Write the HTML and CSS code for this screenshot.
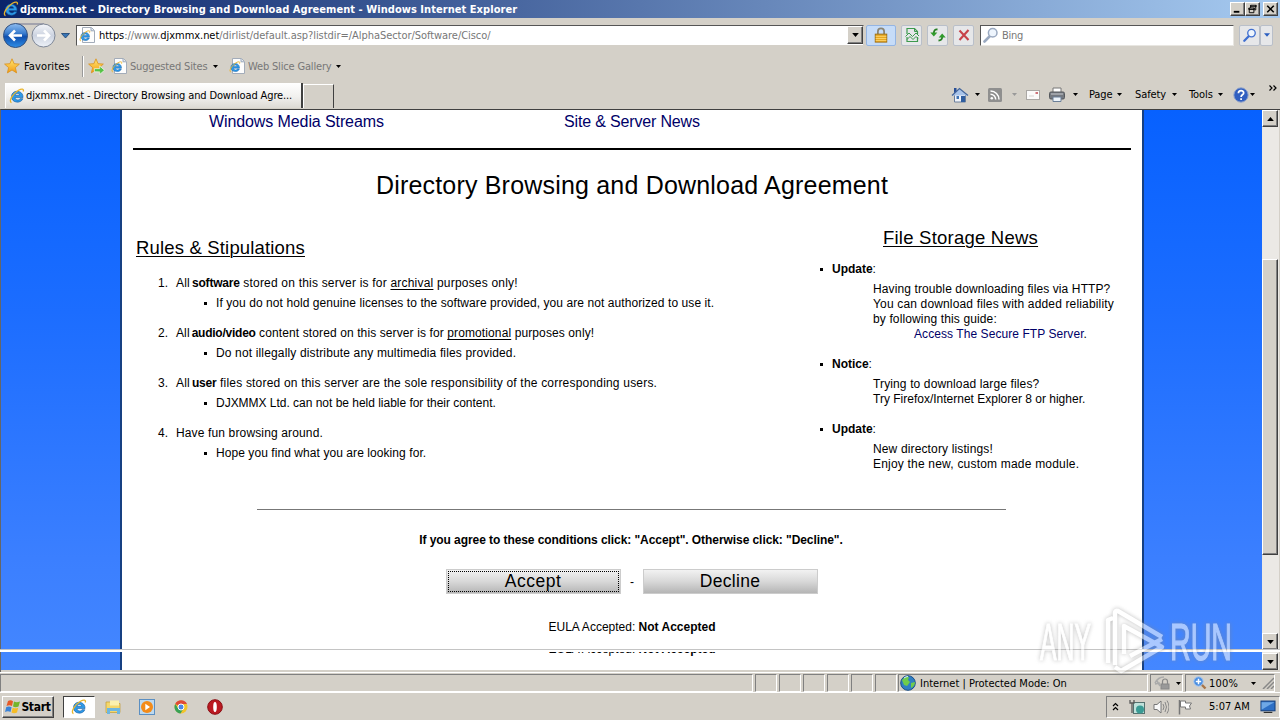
FILE: index.html
```html
<!DOCTYPE html>
<html lang="en"><head><meta charset="utf-8"><title>djxmmx.net</title><link rel="stylesheet" href="styles.css"></head>
<body>
<svg width="0" height="0" class="defs">
<defs>
<linearGradient id="gBlue" x1="0" y1="0" x2="0" y2="1"><stop offset="0" stop-color="#8fbdf0"/><stop offset=".4" stop-color="#3c7fd0"/><stop offset=".55" stop-color="#0f4fae"/><stop offset="1" stop-color="#2f8fe8"/></linearGradient>
<linearGradient id="gPale" x1="0" y1="0" x2="0" y2="1"><stop offset="0" stop-color="#f4f6fa"/><stop offset=".5" stop-color="#ccd3e0"/><stop offset="1" stop-color="#eef2f8"/></linearGradient>
<linearGradient id="gStar" x1="0" y1="0" x2="0" y2="1"><stop offset="0" stop-color="#ffe873"/><stop offset="1" stop-color="#f39a12"/></linearGradient>
</defs>
<symbol id="ie" viewBox="0 0 16 16"><path d="M14 9.600H6c.2 2.800 4.200 3 5 1.100h2.800C12.300 15.800 2.500 15.300 2.500 8.700 2.500 1.200 14.500 1.400 14 9.600zM6 7.200h4.700c-.3-2.300-4.300-2.400-4.700 0z" fill="#2e9ae8" stroke="#12599f" stroke-width=".6" fill-rule="evenodd"/><path d="M2.500 14.700C-.8 13.500 3.500 6 9.500 2.300c3-1.800 6-1.700 4.600 1.200" fill="none" stroke="#e9b52c" stroke-width="1.300"/></symbol>
<symbol id="iepage" viewBox="0 0 16 16"><path d="M3.500.5h9l3 3v12h-12z" fill="#fdfdfd" stroke="#a3acb9"/><path d="M12 .8v3h3" fill="#dde4ee" stroke="#9aa7ba"/><use href="#ie" x="0" y="3" width="12" height="12"/></symbol>
<symbol id="star" viewBox="0 0 16 16"><path d="M8 .8l2.100 4.900 5.300.4-4 3.500 1.200 5.300L8 12l-4.600 2.900 1.200-5.300-4-3.500 5.300-.4z" fill="url(#gStar)" stroke="#d9901c" stroke-width=".8"/></symbol>
<symbol id="dn" viewBox="0 0 5 3"><path d="M0 0h5L2.500 3z" fill="currentColor"/></symbol>
<symbol id="lens" viewBox="0 0 16 16"><path d="M6.500 9.500L1.500 14.500" stroke="currentColor" stroke-width="2.600" stroke-linecap="round"/><circle cx="9.700" cy="5.800" r="4.300" fill="#eef5fd" stroke="currentColor" stroke-width="1.500"/></symbol>
</svg>
<div class="desk">
<header class="title"><svg class="i16"><use href="#ie"/></svg><b>djxmmx.net - Directory Browsing and Download Agreement - Windows Internet Explorer</b>
<div class="wbtns"><span class="raised"><svg viewBox="0 0 14 12"><path d="M3 9h6" stroke="#000" stroke-width="2"/></svg></span><span class="raised"><svg viewBox="0 0 14 12"><path d="M5 2h6v1.500H5zM5 2v3M10.500 2v5H9M3 5h6v1.500H3zM3.500 5v5h5V5" fill="none" stroke="#000"/></svg></span><span class="raised close"><svg viewBox="0 0 14 12"><path d="M3.500 2.500l7 7m0-7l-7 7" stroke="#000" stroke-width="1.700"/></svg></span></div></header>

<nav class="nav">
<svg class="bf" viewBox="0 0 72 30"><path d="M15 4h28" stroke="#a3a3ad" stroke-width="2"/><circle cx="14.500" cy="15.500" r="12" fill="url(#gBlue)" stroke="#34517f"/><circle cx="42.500" cy="15.500" r="11.500" fill="url(#gPale)" stroke="#7d8696"/><path d="M21 15.500H9m5-5l-5 5 5 5" fill="none" stroke="#fff" stroke-width="2.600"/><path d="M36 15.500h12m-5-5l5 5-5 5" fill="none" stroke="#fff" stroke-width="2.600"/><path d="M60.500 13.500h8l-4 4.500z" fill="#3875b5" stroke="#173f70" stroke-width=".8"/></svg>
<div class="addr"><svg class="i16"><use href="#iepage"/></svg><span class="url"><i>https</i>://www.<i>djxmmx.net</i>/dirlist/default.asp?listdir=/AlphaSector/Software/Cisco/</span><span class="raised drop"><svg class="dn7"><use href="#dn"/></svg></span></div>
<span class="tb lock"><svg viewBox="0 0 16 18"><path d="M4.500 8V5a3.500 3.500 0 0 1 7 0v3" fill="none" stroke="#8b8574" stroke-width="2"/><rect x="1.500" y="8" width="13" height="9" fill="#e6a71f" stroke="#9b6b10"/><path d="M2 10.500h12M2 13h12M2 15.300h12" stroke="#ffd873"/></svg></span>
<span class="tb compat"><svg viewBox="0 0 16 16"><path d="M3 7V1.500h7.500l3 3V7M3 10v4.500h10.500V10" fill="none" stroke="#3d9a4d" stroke-width="1.200"/><path d="M10.500 1.500v3h3" fill="none" stroke="#3d9a4d"/><path d="M1.500 9.500L5 6l3.500 3.500L12 6l3 3M3 12.500L6 9.500l3 3 3-3 2 2" fill="none" stroke="#3d9a4d"/></svg></span>
<span class="tb"><svg viewBox="0 0 16 16"><path d="M7.500 2.500Q4 2 3.800 6" fill="none" stroke="#267f24" stroke-width="1.800"/><path d="M.3 5.500h7L3.800 9.500z" fill="#2f9a2b"/><path d="M8.500 13.500Q12 13.500 12.200 10" fill="none" stroke="#267f24" stroke-width="1.800"/><path d="M8.700 10.500h7l-3.500-4z" fill="#2f9a2b"/></svg></span>
<span class="tb"><svg viewBox="0 0 16 16"><path d="M3.500 3.500l9 9.500m0-10l-9 10" stroke="#c7434b" stroke-width="2.100"/></svg></span>
<div class="search"><svg class="i16"><use href="#lens"/></svg><span>Bing</span></div>
<span class="tb go"><svg class="i16"><use href="#lens"/></svg></span><span class="tb god"><svg class="dn7"><use href="#dn"/></svg></span>
</nav>

<div class="favs"><svg class="i16"><use href="#star"/></svg><span class="favt">Favorites</span><span class="vsep"></span><svg class="addf" viewBox="0 0 16 16"><use href="#star" width="15" height="15"/><path d="M6 10h5V7.500L15.500 11.500 11 15.500V13H6z" fill="#56c246" stroke="#fff" stroke-width=".6"/></svg><svg class="i16 s1"><use href="#iepage"/></svg><span class="dim sug">Suggested Sites</span><svg class="dn5"><use href="#dn"/></svg><svg class="i16 s2"><use href="#iepage"/></svg><span class="dim web">Web Slice Gallery</span><svg class="dn5"><use href="#dn"/></svg></div>

<div class="tabs"><div class="tab"><svg class="i16"><use href="#ie"/></svg><span>djxmmx.net - Directory Browsing and Download Agre...</span></div><div class="newtab"></div>
<div class="cmd">
<svg class="c-home" viewBox="0 0 18 16"><path d="M3.500 8v7h11V8" fill="#f0f3f9" stroke="#6b7e9c"/><path d="M1 8.500L8.500 1.500 17 8.500" fill="#a9c4ea" stroke="#46679b" stroke-width="1.300"/><path d="M3 1h2.500v3L3 6z" fill="#294f96"/><rect x="10" y="9" width="4" height="6" fill="#2f5d9f"/><rect x="5.500" y="9" width="2.500" height="3" fill="#3f74b6"/></svg>
<svg class="dn5 d1"><use href="#dn"/></svg>
<svg class="c-rss" viewBox="0 0 14 14"><rect width="14" height="14" rx="1.500" fill="#8f8f8f"/><circle cx="3.800" cy="10.300" r="1.300" fill="#fff"/><path d="M2.500 6.300a5.200 5.200 0 0 1 5.200 5.200M2.500 3a8.500 8.500 0 0 1 8.500 8.500" fill="none" stroke="#fff" stroke-width="1.500"/></svg>
<svg class="dn5 d2"><use href="#dn"/></svg>
<svg class="c-mail" viewBox="0 0 14 10"><rect x=".5" y=".5" width="13" height="9" fill="#fbfafa" stroke="#aaa7a4"/><path d="M9.500 2h2.500v2H9.500z" fill="#ce7379"/><path d="M3 6h5" stroke="#d5d3d1"/></svg>
<svg class="c-print" viewBox="0 0 16 16"><path d="M4 5V1h8v4" fill="#fff" stroke="#777"/><rect x=".5" y="5" width="15" height="7" rx="1.500" fill="#747980" stroke="#55585d"/><path d="M2 7h12" stroke="#c9ccd0"/><path d="M4 10h8v4.500H4z" fill="#edf4fb" stroke="#6b7f98"/></svg>
<svg class="dn5 d3"><use href="#dn"/></svg>
<span class="m1">Page</span><svg class="dn5"><use href="#dn"/></svg><span class="m2">Safety</span><svg class="dn5"><use href="#dn"/></svg><span class="m3">Tools</span><svg class="dn5"><use href="#dn"/></svg>
<svg class="c-help" viewBox="0 0 16 16"><circle cx="8" cy="8" r="7.200" fill="#315fc0" stroke="#93a5cb"/><path d="M5.400 6.300c0-3.400 5.300-3.400 5.300-.4 0 2-2.600 1.800-2.600 4M8.100 11.300v1.800" stroke="#fff" stroke-width="1.700" fill="none"/></svg><svg class="dn5 d4"><use href="#dn"/></svg>
<svg class="chev" viewBox="0 0 8 6"><path d="M.5.5L3 3 .5 5.500M4.500.5L7 3 4.500 5.500" fill="none" stroke="#000" stroke-width="1.200"/></svg>
</div></div>

<div class="view">
<div class="side left"></div>
<main class="page">
<div class="links"><a>Windows Media Streams</a><a>Site &amp; Server News</a></div>
<div class="rule"></div>
<h1>Directory Browsing and Download Agreement</h1>
<div class="cols">
<section class="rules"><h2>Rules &amp; Stipulations</h2>
<ol>
<li><p class="a1">All <b>software</b> stored on this server is for <u>archival</u> purposes only!</p><p class="sub b1">If you do not hold genuine licenses to the software provided, you are not authorized to use it.</p></li>
<li><p class="a2">All <b>audio/video</b> content stored on this server is for <u>promotional</u> purposes only!</p><p class="sub b2">Do not illegally distribute any multimedia files provided.</p></li>
<li><p class="a3">All <b>user</b> files stored on this server are the sole responsibility of the corresponding users.</p><p class="sub b3">DJXMMX Ltd. can not be held liable for their content.</p></li>
<li><p class="a4">Have fun browsing around.</p><p class="sub b4">Hope you find what you are looking for.</p></li>
</ol></section>
<section class="news"><h2>File Storage News</h2>
<div class="item"><h3><b>Update</b>:</h3><p class="n1">Having trouble downloading files via HTTP?</p><p class="n2">You can download files with added reliability</p><p class="n3">by following this guide:</p><p class="ftp"><a>Access The Secure FTP Server</a>.</p></div>
<div class="item"><h3><b>Notice</b>:</h3><p class="n4">Trying to download large files?</p><p class="n5">Try Firefox/Internet Explorer 8 or higher.</p></div>
<div class="item"><h3><b>Update</b>:</h3><p class="n6">New directory listings!</p><p class="n7">Enjoy the new, custom made module.</p></div>
</section></div>
<div class="hr2"></div>
<p class="agree"><b>If you agree to these conditions click: "Accept". Otherwise click: "Decline".</b></p>
<div class="btns"><button class="focus">Accept</button><span>-</span><button class="dec">Decline</button></div>
<p class="eula">EULA Accepted: <b>Not Accepted</b></p>
<div class="echo"><p class="eula">EULA Accepted: <b>Not Accepted</b></p></div>
</main>
<div class="side right"></div>
<div class="scroll"><span class="raised sb"><svg class="dn7 up"><use href="#dn"/></svg></span><span class="track1"></span><span class="raised thumb"></span><span class="track2"></span><span class="raised sb"><svg class="dn7"><use href="#dn"/></svg></span><span class="gap"></span><span class="raised sb"><svg class="dn7"><use href="#dn"/></svg></span></div>
<div class="seam"></div>
<svg class="mark" viewBox="0 0 200 70"><g class="wm"><text x="4" y="54" textLength="51" lengthAdjust="spacingAndGlyphs">ANY</text><text x="134" y="54" textLength="62" lengthAdjust="spacingAndGlyphs">RUN</text><path d="M72 57V14l5-2M79 59V7q0-3 3-2l44 26M88 48V20l38 21-41 24-6-4M94 50l32-17"/></g></svg>
</div>

<footer class="status"><span class="cell grow"></span><span class="cell s"></span><span class="cell s"></span><span class="cell s"></span><span class="cell s"></span><span class="cell s"></span><span class="cell s"></span>
<span class="cell zone"><svg class="i16" viewBox="0 0 16 16"><circle cx="8" cy="8" r="7.300" fill="#2f7fc4" stroke="#1b4e87"/><path d="M2 5q3-4 7-3l-1 3 2 2-3 4-3-1zM11 8l4-1q0 4-4 6z" fill="#6fcc4b"/><path d="M4 3q2-1.500 4-1.500" stroke="#d9f2ff" fill="none"/></svg><span class="inet">Internet | Protected Mode: On</span></span>
<span class="cell prot"><svg viewBox="0 0 16 14"><path d="M1 7q3-6 9-6M1 8l5-1M3 5l3 5" stroke="#aaa" stroke-width="1.500" fill="none"/><path d="M8.500 8V5.500a2.500 2.500 0 0 1 5 0V8" stroke="#888" fill="none" stroke-width="1.200"/><rect x="7" y="8" width="8" height="5" fill="#999" stroke="#888"/></svg><svg class="dn5"><use href="#dn"/></svg></span>
<span class="cell zoomc"><svg class="zl" viewBox="0 0 14 14"><path d="M8.500 8.500l4 4" stroke="#a77549" stroke-width="2.400"/><circle cx="5.500" cy="5.500" r="4.700" fill="#4a8ee0" stroke="#a9c8f0"/><path d="M5.500 2.800v5.400M2.800 5.500h5.400" stroke="#fff" stroke-width="1.500"/></svg><span class="pct">100%</span><svg class="dn5"><use href="#dn"/></svg><svg class="grip" viewBox="0 0 12 12"><path d="M1 12L12 1M5 12l7-7M9 12l3-3" stroke="#888" stroke-width="1.500"/></svg></span></footer>

<div class="task"><span class="raised start"><svg viewBox="0 0 16 16"><path d="M3 2q2.500-1.500 5 .2L7 7Q4.500 5.500 1.500 7z" fill="#e75a27"/><path d="M9 2.500q2.500 1.500 6 0L13.500 7.500q-3 1.500-5.500 0z" fill="#74b52c"/><path d="M1.300 8q2.700-1.300 5.300.2L5.500 13Q3 11.500 0 13z" fill="#3a83d8"/><path d="M7.700 8.700q2.600 1.300 5.500 0L12 13.500q-3 1.500-5.500 0z" fill="#f6bd26"/></svg><b>Start</b></span>
<span class="active"><svg class="i16"><use href="#ie"/></svg></span>
<svg class="q" viewBox="0 0 16 16"><path d="M1 3h5l1 1.500h8v9H1z" fill="#f4d76c" stroke="#c09c35" stroke-width=".7"/><path d="M5 1.500h9v5H5z" fill="#fbf0ae"/><path d="M2 9h13v6h-3v-3H5v3H2z" fill="#6eb6df"/></svg>
<svg class="q" viewBox="0 0 16 16"><rect x=".5" y=".5" width="15" height="15" fill="#bdd9ef" stroke="#5b8fc2"/><circle cx="8" cy="8" r="6" fill="#f38b19"/><path d="M6.300 4.800v6.400L11 8z" fill="#fff"/></svg>
<svg class="q" viewBox="0 0 16 16"><circle cx="8" cy="8" r="6.500" fill="#f2c42c"/><path d="M8 8L2.200 5A6.500 6.500 0 0 1 14 5H8z" fill="#df4a37"/><path d="M2.200 5A6.500 6.500 0 0 0 7.500 14.500L10.500 9.500 5 9z" fill="#39a156"/><circle cx="8" cy="8" r="3" fill="#4b87e8" stroke="#fff"/></svg>
<svg class="q" viewBox="0 0 16 16"><circle cx="8" cy="8" r="7.300" fill="#bb1a21" stroke="#8b0d13"/><ellipse cx="8" cy="8" rx="1.800" ry="5" fill="#fff"/></svg>
<div class="tray"><svg class="t1" viewBox="0 0 7 9"><path d="M1 4l2.500-2.500L6 4M1 8l2.500-2.500L6 8" stroke="#000" fill="none" stroke-width="1.200"/></svg><svg class="i16" viewBox="0 0 16 16"><rect x="4.500" y="3.500" width="11" height="11" fill="#bfe1da" stroke="#54716f"/><circle cx="11" cy="10.500" r="4" fill="#3a9b94"/><path d="M1 1v3h4V1M3 4v10" stroke="#5a5a5a" fill="none" stroke-width="1.300"/></svg><svg class="i16" viewBox="0 0 16 16"><path d="M1 5.500h3L8 2v12l-4-3.500H1z" fill="#f8f8f8" stroke="#777"/><path d="M10 5q2 3 0 6M12 3q3 5 0 10M14 1.500q4 6.500 0 13" stroke="#888" fill="none"/></svg><svg class="i16" viewBox="0 0 16 16"><path d="M2.500 1v14.500" stroke="#777" stroke-width="1.500"/><path d="M3.500 2h5v2h6l-2 3 1 3H8.500V8h-5z" fill="#fff" stroke="#777"/></svg><span class="time">5:07 AM</span><svg class="mon" viewBox="0 0 14 13"><rect x=".5" y="1" width="13" height="9" fill="#2d6fc5" stroke="#17427f"/><path d="M1 2h12L1 9z" fill="#6fa8e6"/><path d="M3 11.500h8" stroke="#222"/></svg></div></div>
</div></body></html>
```
FILE: styles.css
```css
*{box-sizing:border-box}
body,p,h1,h2,h3,ol{margin:0;padding:0}
body{width:1280px;height:720px;overflow:hidden;background:#d4d0c8;color:#000;font-family:"Liberation Sans",Arial,sans-serif;font-size:12px}
svg{display:block;flex:none}
.defs{position:absolute}
.desk{width:1280px;height:720px;display:flex;flex-direction:column;font-family:"DejaVu Sans Condensed","DejaVu Sans",sans-serif;font-size:11px;white-space:nowrap;letter-spacing:-.3px}
.desk>*{flex:none}
.i16{width:16px;height:16px}
.dn5{width:5px;height:3px;color:#000}
.dn7{width:7px;height:4px}
.raised{background:#d4d0c8;border:1px solid;border-color:#fff #404040 #404040 #fff;box-shadow:inset -1px -1px #808080;display:flex;align-items:center;justify-content:center}
.title{height:18px;background:linear-gradient(90deg,#0a246a,#a6caf0);color:#fff;display:flex;align-items:center;padding:0 2px 0 3px;gap:1px;letter-spacing:.05px}
.wbtns{margin-left:auto;display:flex}
.wbtns span{width:15px;height:14px}
.wbtns svg{width:13px;height:12px}
.wbtns .close{margin-left:3px}
.nav{height:34px;display:flex;align-items:center;padding-left:1px}
.bf{width:72px;height:30px;margin-right:3px}
.addr{width:788px;height:21px;background:#fff;border:1px solid;border-color:#555 #d4d0c8 #d4d0c8 #555;display:flex;align-items:center;padding-left:2px}
.url{color:#777;margin-left:4px;letter-spacing:-.05px}
.url i{font-style:normal;color:#000}
.drop{margin-left:auto;width:16px;height:18px}
.tb{width:21px;height:21px;border:1px solid #b9bfc9;background:#e6e7e9;border-radius:2px;display:flex;align-items:center;justify-content:center;margin-left:5px}
.tb svg{width:16px;height:16px}
.lock{width:30px;margin-left:2px;background:#c6dcf8;border-color:#94b5e3}
.search{width:254px;height:21px;margin-left:6px;background:#fff;border:1px solid;border-color:#555 #e8e6e1 #e8e6e1 #555;display:flex;align-items:center;padding-left:2px;gap:3px;color:#777}
.search .i16{color:#9aa9c0}
.go{color:#3f6fd0}
.tb.go .i16{width:14px;height:14px}
.god{margin:0;width:13px;color:#2b5fc0}
.tb .dn7{width:6px;height:4px}
.favs{height:28px;display:flex;align-items:center;padding-left:4px}
.favt{width:58px;margin-left:4px;letter-spacing:.12px}
.vsep{width:2px;height:21px;border-left:1px solid #999;border-right:1px solid #fff;margin-right:4px}
.addf{width:17px;height:17px}
.s1{margin-left:6px}.s2{margin-left:11px}
.dim{color:#777;margin-left:3px;letter-spacing:-.17px}
.sug{width:80px}.web{width:85px}
.dim+.dn5{margin-left:3px}
.tabs{height:29px;display:flex;padding-left:5px}
.tab{width:298px;margin-top:3px;height:25px;background:linear-gradient(#fff,#f1f0ee 55%,#dddad4);border-right:2px solid #404040;border-left:1px solid #fff;display:flex;align-items:center;padding-left:3px;gap:1px;letter-spacing:-.13px}
.newtab{width:31px;height:24px;margin-top:4px;border-top:1px solid #fff;border-left:1px solid #fff;border-right:1px solid #404040}
.cmd{margin-left:auto;display:flex;align-items:center;padding-right:3px;letter-spacing:-.1px}
.c-home{width:18px;height:16px}.d1{margin-left:6px}
.c-rss{width:14px;height:14px;margin-left:8px}.dn5.d2{margin-left:10px;color:#999}
.c-mail{width:14px;height:10px;margin-left:9px}
.c-print{width:16px;height:16px;margin-left:9px}.d3{margin-left:8px}
.m1{width:25px;margin:0 3px 0 11px}.m2{width:34px;margin:0 3px 0 13px}.m3{width:26px;margin:0 3px 0 12px}
.c-help{width:16px;height:16px;margin-left:10px}.d4{margin-left:1px}
.chev{width:8px;height:6px;margin:0 0 13px 14px}
.view{position:relative;height:563px;border-top:1px solid #404040;border-left:1px solid #666;display:flex;padding-bottom:2px;font-family:"Liberation Sans",Arial,sans-serif;font-size:12px;letter-spacing:0}
.side{height:560px;background:linear-gradient(#0761ff,#1c6dff 36%,#3b7fff 80%,#4487ff)}
.left{width:121px;border-right:2px solid #164082}
.right{width:120px;border-left:2px solid #164082}
.page{width:1020px;background:#fff;overflow:hidden;padding-left:11px}
.links{height:38px;padding:1px 0 0 76px;display:flex;font-size:16px;line-height:21px;letter-spacing:-.1px}
.links a{width:355px;color:#000068}
.links a+a{letter-spacing:-.16px}
.rule{width:998px;height:2px;background:#000}
h1{width:998px;text-align:center;font-weight:400;font-size:25px;line-height:30px;margin-top:20px;margin-bottom:1px;letter-spacing:.19px}
.cols{display:flex;height:308px}
h2{font-weight:400;font-size:18.500px;text-decoration:underline;text-decoration-thickness:1px;text-underline-offset:2px;line-height:22px;letter-spacing:.17px}
.rules{width:683px;padding:36px 0 0 3px}
ol{list-style:none;margin-top:14px;counter-reset:n}
li{height:50px;padding-left:40px}
li p{line-height:20px}
li p:first-child{display:flex;white-space:pre;counter-increment:n}
li p:first-child:before{content:counter(n) ".";width:18px;margin-left:-18px;letter-spacing:0}
li p b,h3 b{letter-spacing:-.2px}
li p b{margin-left:-1.500px}
u{text-decoration-thickness:1px;text-underline-offset:2px}
.a1{letter-spacing:.2px}.a2{letter-spacing:.11px}.a2 u+*{letter-spacing:.2px}.a3{letter-spacing:.195px}.a4{letter-spacing:.14px}
.a2 b{letter-spacing:-.24px}
.b1{letter-spacing:.075px}.b2{letter-spacing:.15px}.b3{letter-spacing:-.02px}.b4{letter-spacing:.07px}
.n1{letter-spacing:.11px}.n2{letter-spacing:.16px}.n3{letter-spacing:.13px}.n4{letter-spacing:.13px}.n6{letter-spacing:.14px}.n7{letter-spacing:.2px}
.sub{padding-left:40px;display:flex;align-items:center}
.sub:before,h3:before{content:"";width:3px;height:3px;background:#000;margin:0 9px 0 -12px}
.news{width:314px;padding-top:26px}
.news h2{padding-left:67px;letter-spacing:.23px}
.item{padding-left:57px;line-height:15px}
.item h3{font-weight:400;font-size:12px;height:20px;margin:0 0 0 -41px;line-height:15px;display:flex;align-items:center;padding-bottom:5px}
.item h3 b{letter-spacing:-.02px}
.item+.item{margin-top:15px}
.news h2+.item{margin-top:13px}
.item a{color:#000068}
.ftp{padding-left:41px;letter-spacing:.07px}
.hr2{width:749px;height:1px;background:#777;margin:0 0 0 124px}
.agree{text-align:center;width:996px;line-height:16px;margin-top:22px;letter-spacing:-.07px}
.btns{display:flex;margin:21px 0 0 313px;height:25px;align-items:center}
.btns span{width:22px;text-align:center}
button{width:175px;height:25px;border:1px solid #ccc;background:linear-gradient(#f2f2f2,#d8d8d8 50%,#b5b5b5);font:17.500px "Liberation Sans",Arial,sans-serif;padding:0 1px 0 0;color:#000;letter-spacing:.5px}
button.focus{outline:1px dotted #000;outline-offset:-3px}
button.dec{letter-spacing:.3px}
.eula{width:998px;text-align:center;line-height:16px;margin-top:25px}
.echo{height:5px;overflow:hidden;margin-top:16px}
.echo .eula{margin-top:-10px}
.scroll{width:17px;display:flex;flex-direction:column;background:#ebe9e5}
.sb{height:17px;width:16px}
.up{transform:scaleY(-1)}
.track1{height:132px}
.thumb{height:296px;width:16px}
.track2{height:78px}
.gap{height:3px}
.seam{position:absolute;left:-1px;top:539px;width:1280px;height:3px;background:#fff;border-top:1px solid #c4c4c4}
.mark{position:absolute;left:1035px;top:496px;width:200px;height:70px;overflow:visible}
.wm{fill:#fff;stroke:none;opacity:.55;filter:drop-shadow(0 0 2px #888)}
.wm text{font:51px "Liberation Sans",sans-serif;stroke:#fff;stroke-width:1.200}
.wm path{fill:none;stroke:#fff;stroke-width:4.500;stroke-linejoin:round}
.status{height:21px;border-top:1px solid #fff;display:flex;padding:1px 0 1px;border-bottom:1px solid #fff}
.cell{border:1px solid;border-color:#808080 #fff #fff #808080;display:flex;align-items:center;margin-right:2px;height:18px}
.grow{width:753px}.s{width:22px}
.zone{width:250px;padding-left:1px;gap:4px;margin-left:-1px;letter-spacing:0}
.prot{width:33px;padding-left:3px;gap:6px}
.prot svg:first-child{width:16px;height:14px}
.zoomc{width:90px;padding-left:7px;gap:2px;margin:0}
.zl{width:14px;height:14px}.pct{width:45px;letter-spacing:.2px}
.grip{width:12px;height:12px;margin-left:4px}
.task{height:27px;display:flex;align-items:center;padding-left:2px}
.start{width:52px;height:22px}
.start svg{width:16px;height:16px}
.start b{font-size:12px}
.active{width:32px;height:22px;margin:0 9px;background:#fff;border:1px solid;border-color:#404040 #fff #fff #404040;display:flex;align-items:center;justify-content:center}
.q{width:16px;height:16px;margin:0 9px 0 1px}
.q+.q{margin:0 9px}
.tray{margin-left:auto;width:174px;height:22px;border:1px solid;border-color:#808080 #fff #fff #808080;display:flex;align-items:center;padding-left:5px;gap:8px}
.t1{width:7px;height:9px;margin-right:2px}
.time{width:43px;margin-left:8px;letter-spacing:0}
.mon{width:16px;height:14px}
```
